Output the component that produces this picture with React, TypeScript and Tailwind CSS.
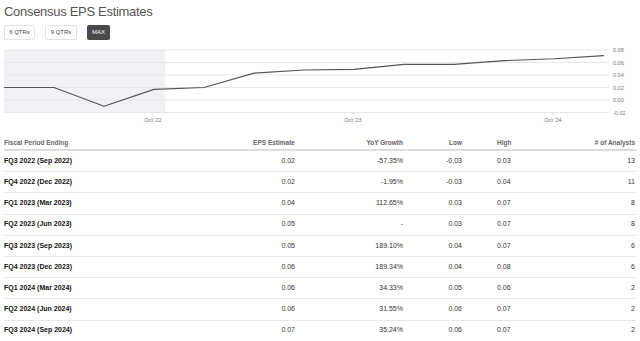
type Row = {
  period: string
  eps: string
  yoy: string
  low: string
  high: string
  analysts: string
}

const rows: Row[] = [
  { period: "FQ3 2022 (Sep 2022)", eps: "0.02", yoy: "-57.35%", low: "-0.03", high: "0.03", analysts: "13" },
  { period: "FQ4 2022 (Dec 2022)", eps: "0.02", yoy: "-1.95%", low: "-0.03", high: "0.04", analysts: "11" },
  { period: "FQ1 2023 (Mar 2023)", eps: "0.04", yoy: "112.65%", low: "0.03", high: "0.07", analysts: "8" },
  { period: "FQ2 2023 (Jun 2023)", eps: "0.05", yoy: "-", low: "0.03", high: "0.07", analysts: "8" },
  { period: "FQ3 2023 (Sep 2023)", eps: "0.05", yoy: "189.10%", low: "0.04", high: "0.07", analysts: "6" },
  { period: "FQ4 2023 (Dec 2023)", eps: "0.06", yoy: "189.34%", low: "0.04", high: "0.08", analysts: "6" },
  { period: "FQ1 2024 (Mar 2024)", eps: "0.06", yoy: "34.33%", low: "0.05", high: "0.06", analysts: "2" },
  { period: "FQ2 2024 (Jun 2024)", eps: "0.06", yoy: "31.55%", low: "0.06", high: "0.07", analysts: "2" },
  { period: "FQ3 2024 (Sep 2024)", eps: "0.07", yoy: "35.24%", low: "0.06", high: "0.07", analysts: "2" },
]

// chart values, one point every 50px starting at x=4
const values = [0.02, 0.02, -0.01, 0.017, 0.02, 0.043, 0.048, 0.049, 0.057, 0.057, 0.063, 0.066, 0.071]

const TOP = 43
const yFor = (v: number) => 100 - v * 625 - TOP

function Chart() {
  const grid = [0.08, 0.06, 0.04, 0.02, 0, -0.02]
  const pts = values.map((v, i) => `${4 + i * 50},${yFor(v)}`).join(" ")
  return (
    <svg width="640" height="86" className="block">
      <rect x="4" y={yFor(0.08)} width="161" height={yFor(-0.02) - yFor(0.08)} fill="#f1f2f6" />
      {grid.map((g) => (
        <g key={g}>
          <line x1="4" x2="609" y1={yFor(g)} y2={yFor(g)} stroke="#e7e7e7" strokeWidth="1" />
          <text x="613" y={yFor(g) + 2} fontSize="5.5" fill="#777" fontFamily="Liberation Sans, sans-serif">
            {g.toFixed(2)}
          </text>
        </g>
      ))}
      {[
        { x: 153, l: "Oct '22" },
        { x: 353, l: "Oct '23" },
        { x: 553, l: "Oct '24" },
      ].map((t) => (
        <g key={t.l}>
          <line x1={t.x} x2={t.x} y1={yFor(-0.02)} y2={yFor(-0.02) + 3} stroke="#ddd" strokeWidth="1" />
          <text x={t.x} y={yFor(-0.02) + 9.5} fontSize="5.5" fill="#777" textAnchor="middle" fontFamily="Liberation Sans, sans-serif">
            {t.l}
          </text>
        </g>
      ))}
      <polyline points={pts} fill="none" stroke="#555" strokeWidth="1.1" strokeLinejoin="round" />
    </svg>
  )
}

export default function App() {
  return (
    <div className="h-[341px] w-[640px] overflow-hidden bg-white font-['Liberation_Sans',Arial,sans-serif] text-[#222]">
      <div className="px-[4px] pt-[3px]">
        <h1 className="text-[13px] leading-[18px] tracking-[-0.3px] text-[#555] font-normal">Consensus EPS Estimates</h1>
        <div className="mt-[4px] flex gap-[10px]">
          <span className="flex h-[15px] w-[31px] items-center justify-center rounded-[2px] border border-[#e2e2e2] text-[6px] text-[#444]">
            6 QTRs
          </span>
          <span className="flex h-[15px] w-[32px] items-center justify-center rounded-[2px] border border-[#e2e2e2] text-[6px] text-[#444]">
            9 QTRs
          </span>
          <span className="flex h-[15px] w-[23px] items-center justify-center rounded-[2px] bg-[#4a4a4a] text-[6px] text-white">
            MAX
          </span>
        </div>
      </div>
      <div className="mt-[3px]">
        <Chart />
      </div>
      <div className="mx-[4px] mt-[8px]">
        <div className="flex h-[14px] items-center border-b-[2px] border-[#ddd] text-[6.5px] font-semibold text-[#666]">
          <div className="w-[196px]">Fiscal Period Ending</div>
          <div className="w-[95px] text-right">EPS Estimate</div>
          <div className="w-[108px] text-right">YoY Growth</div>
          <div className="w-[59px] text-right">Low</div>
          <div className="w-[100px] pl-[35px]">High</div>
          <div className="flex-1 pr-[1px] text-right"># of Analysts</div>
        </div>
        {rows.map((r) => (
          <div key={r.period} className="flex h-[21.2px] items-center border-b border-[#e8e8e8] text-[7px]">
            <div className="w-[196px] font-bold text-[#111]">{r.period}</div>
            <div className="w-[95px] text-right text-[#333]">{r.eps}</div>
            <div className="w-[108px] text-right text-[#333]">{r.yoy}</div>
            <div className="w-[59px] text-right text-[#333]">{r.low}</div>
            <div className="w-[100px] pl-[35px] text-[#333]">{r.high}</div>
            <div className="flex-1 pr-[1px] text-right text-[#333]">{r.analysts}</div>
          </div>
        ))}
      </div>
    </div>
  )
}
